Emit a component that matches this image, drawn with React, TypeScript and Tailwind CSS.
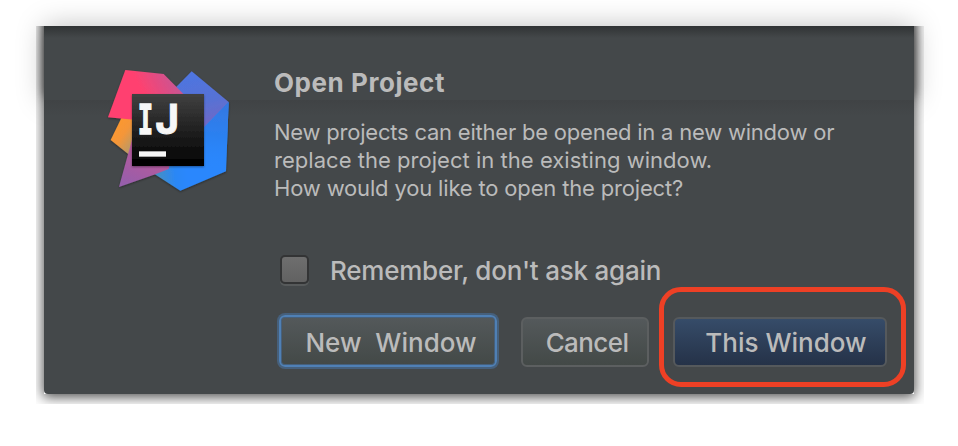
import type { ReactNode } from 'react';
import clsx from 'clsx';

export default function App() {
  return (
    <div className="relative h-[446px] w-[958px] overflow-hidden bg-white font-['Inter','Liberation_Sans',sans-serif] text-[#bbbbbb]">
      <WindowShadows />
      <main className="relative mx-[44px] mt-[26px] flex h-[368px] w-[870px] rounded-b-[4px] bg-[#44484a]">
        <TitleSheet />
        <div className="relative ml-[46px] mt-[24px] w-[184px] shrink-0">
          <IdeaLogo />
        </div>

        <div className="relative flex flex-col pt-[41px]">
          <h1 className="whitespace-nowrap text-[26px] font-bold leading-[32px] tracking-[0.55px]">Open Project</h1>
          <p className="mt-[19px] whitespace-nowrap text-[22px] leading-[28px]">
            <span className="block tracking-[-0.22px]">New projects can either be opened in a new window or</span>
            <span className="block tracking-[0.03px]">replace the project in the existing window.</span>
            <span className="block tracking-[-0.17px]">How would you like to open the project?</span>
          </p>

          <label className="mt-[50px] flex h-[34px] items-center pl-[6px]">
            <span className="h-[29px] w-[29px] rounded-[5px] border-2 border-[#333435] bg-gradient-to-b from-[#6e6e6e] to-[#626262] shadow-[0_2px_0_#575a5b]" />
            <span className="ml-[21px] mt-[2px] whitespace-nowrap text-[26px] font-[450] tracking-[-0.22px]">
              Remember, don't ask again
            </span>
          </label>

          <div className="mt-[29px] flex items-center">
            <DialogButton variant="focused">New&nbsp; Window</DialogButton>
            <DialogButton variant="plain">Cancel</DialogButton>
            <DialogButton variant="primary">This Window</DialogButton>
          </div>
        </div>

        <div className="absolute left-[615px] top-[261px] h-[100px] w-[247px] rounded-[22px] border-[5px] border-[#ee4025]" />
      </main>
    </div>
  );
}

function DialogButton({ variant, children }: { variant: 'focused' | 'plain' | 'primary'; children: ReactNode }) {
  return (
    <button
      className={clsx(
        'flex shrink-0 items-center justify-center whitespace-nowrap text-[26px] font-[450]',
        variant === 'focused' &&
          'ml-[5px] h-[52px] w-[218px] rounded-[6px] border-2 border-[#4f80b5] bg-gradient-to-b from-[#54595b] to-[#434947] pl-[6px] pt-[2px] shadow-[0_0_0_2px_#46607c,inset_0_0_0_1px_#46607c]',
        variant === 'plain' &&
          'ml-[24px] mt-[2px] h-[50px] w-[128px] rounded-[6px] border-2 border-[#5c5f60] bg-gradient-to-b from-[#54595b] to-[#434947] pl-[4px] tracking-[-0.6px]',
        variant === 'primary' &&
          'ml-[24px] mt-[2px] h-[50px] w-[214px] rounded-[6px] border-2 border-[#55595c] bg-gradient-to-b from-[#364c69] to-[#253248] pl-[12px]',
      )}
    >
      {children}
    </button>
  );
}

function WindowShadows() {
  return (
    <>
      {/* wide glow of the parent title bar */}
      <div className="absolute left-[44px] top-[26px] h-[74px] w-[870px] shadow-[0_0_28px_rgba(0,0,0,0.26)]" />
      {/* dialog drop shadow, cut off at the top edge */}
      <div className="absolute bottom-[42px] left-[36px] right-[34px] top-[26px] overflow-hidden">
        <div className="absolute -top-[20px] left-[8px] h-[388px] w-[870px] shadow-[0_2px_12px_1px_rgba(0,0,0,0.7)]" />
        <div className="absolute -top-[12px] left-[8px] h-[82px] w-[870px] shadow-[0_0_10px_rgba(0,0,0,0.5)]" />
      </div>
    </>
  );
}

function TitleSheet() {
  return (
    <>
      <div className="absolute inset-x-0 top-0 h-[12px] bg-gradient-to-b from-[#303334] to-transparent" />
      <div className="absolute inset-x-0 top-[74px] h-[16px] bg-gradient-to-b from-[#404345] to-transparent" />
    </>
  );
}

function IdeaLogo() {
  return (
    <svg className="h-[160px] w-[160px]" viewBox="0 0 480 480">
      <defs>
        <linearGradient id="orange" x1="65" y1="240" x2="150" y2="300" gradientUnits="userSpaceOnUse">
          <stop offset="0" stopColor="#fc9830" />
          <stop offset="0.35" stopColor="#f49639" />
          <stop offset="0.9" stopColor="#a79a74" />
        </linearGradient>
        <linearGradient id="pink" x1="170" y1="150" x2="275" y2="95" gradientUnits="userSpaceOnUse">
          <stop offset="0" stopColor="#ff416f" />
          <stop offset="1" stopColor="#c35897" />
        </linearGradient>
        <linearGradient id="purple" x1="100" y1="400" x2="150" y2="290" gradientUnits="userSpaceOnUse">
          <stop offset="0" stopColor="#965eab" />
          <stop offset="1" stopColor="#b9599a" />
        </linearGradient>
        <linearGradient id="indigo" x1="310" y1="80" x2="350" y2="230" gradientUnits="userSpaceOnUse">
          <stop offset="0" stopColor="#4f74df" />
          <stop offset="0.5" stopColor="#5672d5" />
          <stop offset="1" stopColor="#7068c6" />
        </linearGradient>
        <linearGradient id="blue" x1="200" y1="370" x2="290" y2="360" gradientUnits="userSpaceOnUse">
          <stop offset="0" stopColor="#448fc3" />
          <stop offset="0.6" stopColor="#2b87f5" />
          <stop offset="1" stopColor="#2987fd" />
        </linearGradient>
        <linearGradient id="blueShade" x1="400" y1="160" x2="385" y2="360" gradientUnits="userSpaceOnUse">
          <stop offset="0" stopColor="#3577e0" />
          <stop offset="0.5" stopColor="#2c7fee" stopOpacity="0.8" />
          <stop offset="1" stopColor="#2987fd" stopOpacity="0" />
        </linearGradient>
        <linearGradient id="plate" x1="0" y1="132" x2="0" y2="348" gradientUnits="userSpaceOnUse">
          <stop offset="0" stopColor="#414141" />
          <stop offset="1" stopColor="#000000" />
        </linearGradient>
        <filter id="drop" x="-10%" y="-10%" width="120%" height="120%">
          <feDropShadow dx="0" dy="3" stdDeviation="3" floodColor="#000000" floodOpacity="0.4" />
        </filter>
      </defs>
      <g filter="url(#drop)">
        <polygon points="96,200 140,200 140,332 62,270" fill="url(#orange)" />
        <polygon points="305,64 416,156 340,240 240,230 240,130" fill="url(#indigo)" />
        <polygon points="416,156 408,364 271,422 190,370 230,340 340,234" fill="url(#blue)" />
        <polygon points="416,156 408,364 271,422 250,409 250,340 340,234" fill="url(#blueShade)" />
        <polygon points="130,255 240,340 236,357 196,373 87,411" fill="url(#purple)" />
        <polygon points="106,60 221,72 290,142 240,220 54,202" fill="url(#pink)" />
      </g>
      <rect x="126" y="132" width="216" height="216" fill="url(#plate)" filter="url(#drop)" />
      <g fill="#f7f7f7" stroke="#f7f7f7" className="font-bold">
        <text
          className="font-['DejaVu_Sans_Mono',monospace]"
          fontSize="124"
          strokeWidth="4"
          transform="translate(143 253) scale(0.62 1)"
        >
          I
        </text>
        <text className="font-['Inter',sans-serif]" fontSize="125" strokeWidth="3" transform="translate(196 252) scale(0.98 1)">
          J
        </text>
      </g>
      <rect x="147" y="304" width="81" height="16" fill="#f7f7f7" />
    </svg>
  );
}
